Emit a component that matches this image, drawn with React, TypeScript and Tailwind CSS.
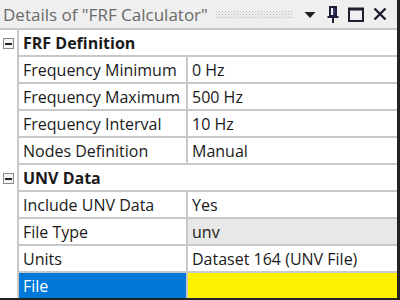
import React from 'react';

type Row =
  | { kind: 'group'; label: string }
  | { kind: 'prop'; name: string; value: string; readOnly?: boolean; selected?: boolean };

const rows: Row[] = [
  { kind: 'group', label: 'FRF Definition' },
  { kind: 'prop', name: 'Frequency Minimum', value: '0 Hz' },
  { kind: 'prop', name: 'Frequency Maximum', value: '500 Hz' },
  { kind: 'prop', name: 'Frequency Interval', value: '10 Hz' },
  { kind: 'prop', name: 'Nodes Definition', value: 'Manual' },
  { kind: 'group', label: 'UNV Data' },
  { kind: 'prop', name: 'Include UNV Data', value: 'Yes' },
  { kind: 'prop', name: 'File Type', value: 'unv', readOnly: true },
  { kind: 'prop', name: 'Units', value: 'Dataset 164 (UNV File)' },
  { kind: 'prop', name: 'File', value: '', selected: true },
];

function Grip() {
  return (
    <svg width="76" height="8" className="block">
      <defs>
        <pattern id="grip" width="3" height="3" patternUnits="userSpaceOnUse">
          <rect x="0" y="0" width="1" height="1" fill="#b9b9b9" />
          <rect x="1.5" y="1.5" width="1" height="1" fill="#c8c8c8" />
        </pattern>
      </defs>
      <rect width="76" height="8" fill="url(#grip)" />
    </svg>
  );
}

function TitleBar() {
  return (
    <div className="h-[30px] bg-[#efefef] flex items-center pl-[3px] pr-[10px] border-b-2 border-[#c8c8c8]">
      <span className="text-[17px] text-[#6a6a6a] leading-none whitespace-nowrap">
        Details of "FRF Calculator"
      </span>
      <div className="ml-[8px] mt-[1px]">
        <Grip />
      </div>
      <div className="ml-auto flex items-center">
        {/* dropdown arrow */}
        <svg width="12" height="8" viewBox="0 0 12 8" className="mr-[11px] mt-[2px]">
          <path d="M0.5 1 L11.5 1 L6 7 Z" fill="#1e1e1e" />
        </svg>
        {/* pin */}
        <svg width="12" height="17" viewBox="0 0 12 17" className="mr-[9px]">
          <rect x="3" y="1" width="6" height="9" fill="none" stroke="#1e1e3a" strokeWidth="2" />
          <rect x="6" y="2" width="2" height="7" fill="#3a3a6a" />
          <rect x="0.5" y="10" width="11" height="2" fill="#1e1e3a" />
          <rect x="5" y="12" width="2" height="5" fill="#1e1e3a" />
        </svg>
        {/* maximize */}
        <svg width="16" height="15" viewBox="0 0 16 15" className="mr-[9px]">
          <rect x="1" y="1.5" width="14" height="12.5" fill="none" stroke="#1e1e2e" strokeWidth="2" />
          <rect x="1" y="1" width="14" height="2.5" fill="#1e1e2e" />
        </svg>
        {/* close */}
        <svg width="14" height="14" viewBox="0 0 14 14">
          <path d="M1.5 1.5 L12.5 12.5 M12.5 1.5 L1.5 12.5" stroke="#1e1e2e" strokeWidth="2.4" />
        </svg>
      </div>
    </div>
  );
}

function Expander() {
  return (
    <div className="w-[11px] h-[11px] border border-[#8a8a8a] bg-[#f4f4f4] flex items-center justify-center">
      <div className="w-[7px] h-[2px] bg-[#222]" />
    </div>
  );
}

function GridRow({ row }: { row: Row }) {
  if (row.kind === 'group') {
    return (
      <div className="flex h-[27px]">
        <div className="w-[17px] shrink-0 flex items-center justify-start pl-[3px]">
          <Expander />
        </div>
        <div className="flex-1 border-l-2 border-b-2 border-[#c8c8c8] flex items-center pl-[4px] font-bold text-[#1a1a1a]">
          {row.label}
        </div>
      </div>
    );
  }
  return (
    <div className="flex h-[27px]">
      <div className="w-[17px] shrink-0" />
      <div
        className={`w-[171px] shrink-0 border-l-2 border-b-2 border-r-2 border-[#c8c8c8] flex items-center pl-[4px] ${
          row.selected ? 'bg-[#0078d7] text-white border-b-0' : 'text-[#1a1a1a]'
        }`}
      >
        {row.name}
      </div>
      <div
        className={`flex-1 border-b-2 border-[#c8c8c8] flex items-center pl-[4px] ${
          row.readOnly ? 'bg-[#e8e8e8]' : row.selected ? 'bg-[#fff200] border-b-0' : 'bg-white'
        } text-[#1a1a1a]`}
      >
        {row.value}
      </div>
    </div>
  );
}

export default function App() {
  return (
    <div className="w-[400px] h-[300px] bg-white overflow-hidden border-r-[3px] border-b-[2px] border-[#222] text-[16px] leading-none font-['Open_Sans','Noto_Sans',sans-serif]">
      <TitleBar />
      <div className="flex flex-col">
        {rows.map((row, i) => (
          <GridRow key={i} row={row} />
        ))}
      </div>
    </div>
  );
}
